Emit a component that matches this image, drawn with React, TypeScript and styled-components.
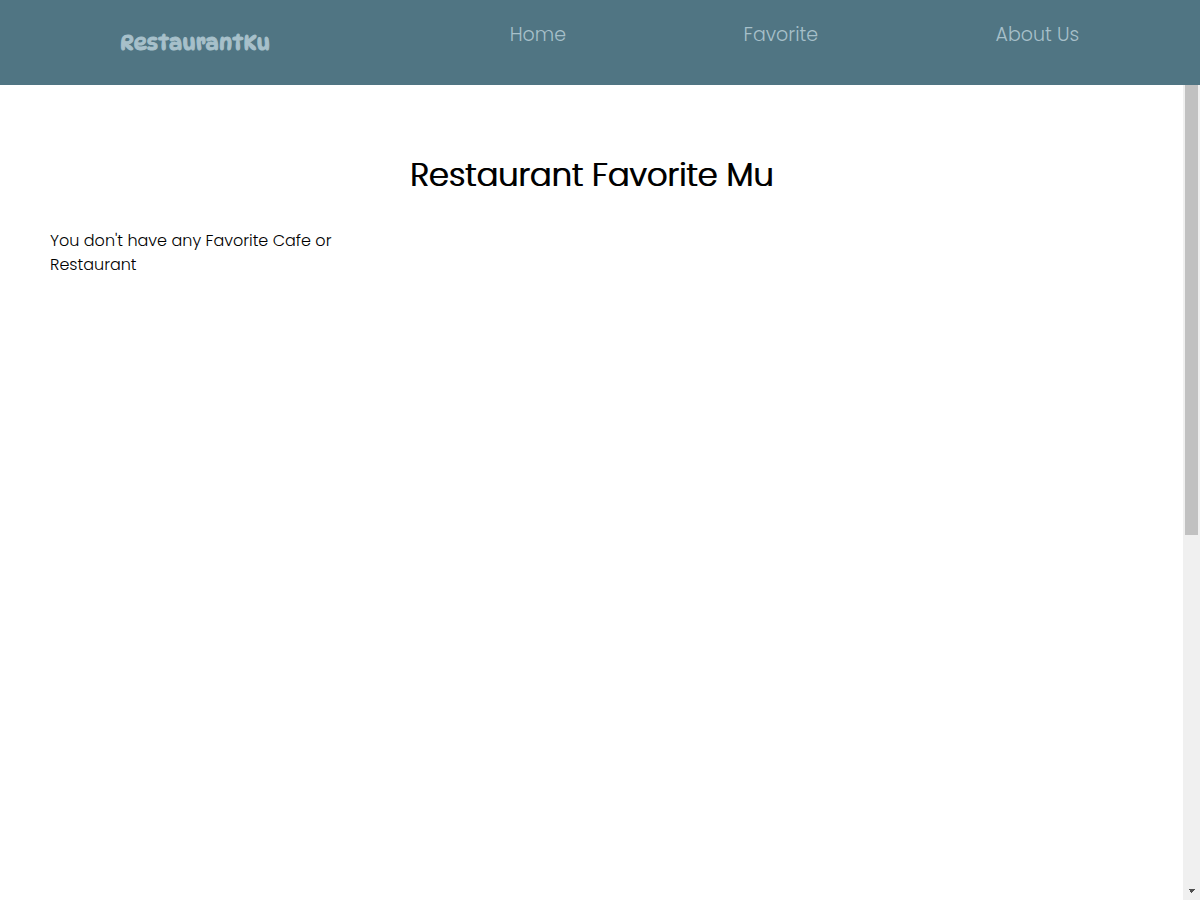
import React from "react";
import styled, { createGlobalStyle } from "styled-components";

const GlobalStyle = createGlobalStyle`
  * { box-sizing: border-box; }
  body {
    margin: 0;
    background: #fff;
    color: #000;
    font-family: Poppins, Inter, "Open Sans", sans-serif;
    font-size: 16px;
    font-weight: 300;
    line-height: 24px;
  }
`;

const Page = styled.div`
  display: flex;
  flex-direction: column;
  min-height: 100vh;
`;

const Header = styled.header`
  display: flex;
  gap: 63px;
  min-height: 85px;
  padding: 0 32px;
  background: #507583;
  color: #a7c0ca;
`;

const Brand = styled.a`
  flex: 0 0 326px;
  padding-top: 29px;
  color: inherit;
  text-align: center;
  text-decoration: none;
  font-family: DynaPuff, Lato, sans-serif;
  font-size: 21px;
  font-weight: 400;
  line-height: 28px;
  -webkit-text-stroke: 1px #a7c0ca;
`;

const NavList = styled.ul`
  display: flex;
  justify-content: space-around;
  margin: 0;
  padding: 20px 0 0;
  list-style: none;
`;

const Nav = styled.nav`
  flex: 1;
`;

const NavItem = styled.li`
  line-height: 30px;
`;

const NavLink = styled.a`
  color: inherit;
  text-decoration: none;
  font-size: 19px;
`;

const Body = styled.div`
  display: flex;
  flex: 1;
`;

const Main = styled.main`
  flex: 1;
  padding: 66px 50px 50px;
`;

const Title = styled.h1`
  margin: 0;
  text-align: center;
  font-size: 32px;
  font-weight: 300;
  line-height: 48px;
  text-shadow: 1px 0 #000;
`;

const CardGrid = styled.section`
  display: grid;
  grid-template-columns: repeat(3, 1fr);
  gap: 50px;
  margin-top: 30px;
`;

const Message = styled.p`
  margin: 0;
`;

const ScrollTrack = styled.div`
  display: flex;
  flex-direction: column;
  justify-content: space-between;
  flex: 0 0 17px;
  padding: 0 2px;
  background: #f0f0f0;
`;

const ScrollThumb = styled.div`
  height: 450px;
  background: #c1c1c1;
`;

const ScrollArrow = styled.svg`
  display: block;
  width: 13px;
  height: 17px;
`;

const links = ["Home", "Favorite", "About Us"];

export default function App() {
  return (
    <Page>
      <GlobalStyle />
      <Header>
        <Brand href="#">RestaurantKu</Brand>
        <Nav>
          <NavList>
            {links.map((label) => (
              <NavItem key={label}>
                <NavLink href="#">{label}</NavLink>
              </NavItem>
            ))}
          </NavList>
        </Nav>
      </Header>
      <Body>
        <Main>
          <Title>Restaurant Favorite Mu</Title>
          <CardGrid>
            <Message>You don't have any Favorite Cafe or Restaurant</Message>
          </CardGrid>
        </Main>
        <ScrollTrack aria-hidden="true">
          <ScrollThumb />
          <ScrollArrow viewBox="0 0 13 17" shapeRendering="crispEdges">
            <path d="M4 6h6v1H9v1H8v1H7v1H6V9H5V7H4z" fill="#505050" />
          </ScrollArrow>
        </ScrollTrack>
      </Body>
    </Page>
  );
}
